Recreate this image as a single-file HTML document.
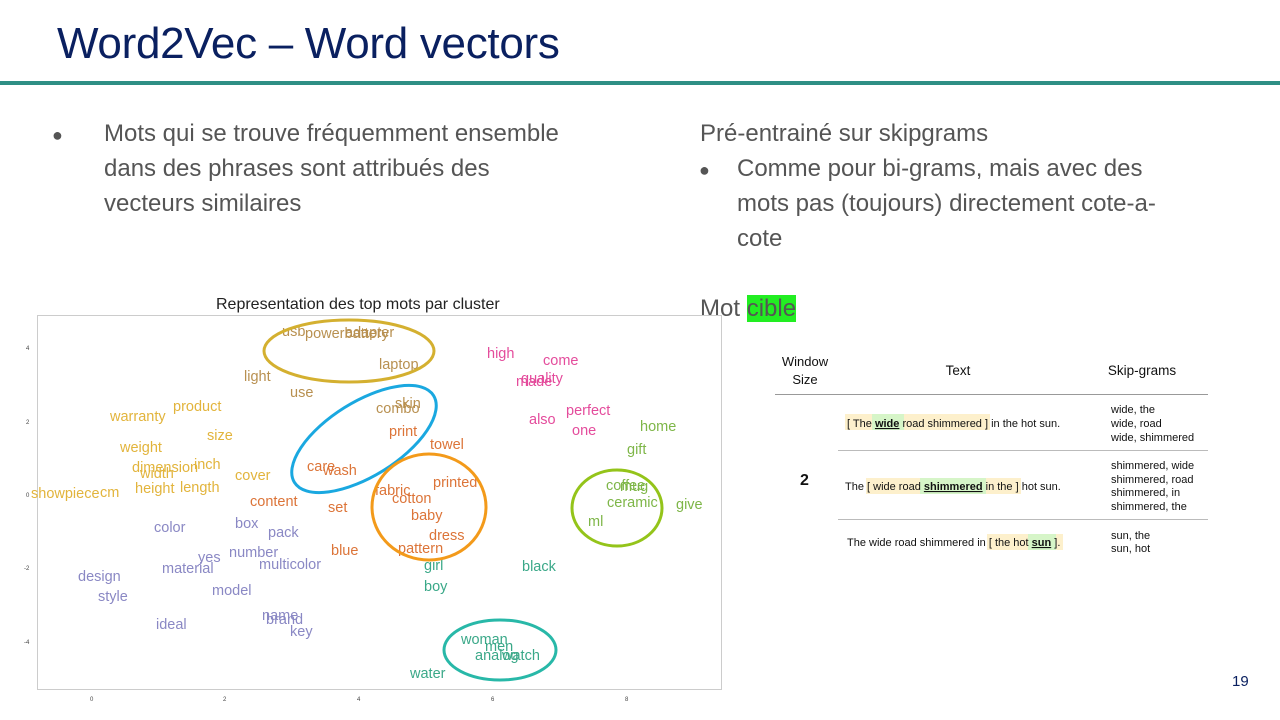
<!DOCTYPE html>
<html><head><meta charset="utf-8"><style>
body{margin:0;width:1280px;height:720px;background:#fff;position:relative;overflow:hidden;font-family:"Liberation Sans",sans-serif}
.t{position:absolute;left:57px;top:19px;font-size:44px;color:#0a2060;letter-spacing:-0.3px}
.bar{position:absolute;left:0;top:81px;width:1280px;height:4px;background:#2e8f85}
.txt{position:absolute;font-size:24px;color:#555;line-height:35px}
.dot{position:absolute;font-size:18px;color:#555}
</style></head><body>
<div class="t">Word2Vec – Word vectors</div>
<div class="bar"></div>
<div class="dot" style="left:52px;top:125px">●</div>
<div class="txt" style="left:104px;top:116px;width:470px">Mots qui se trouve fréquemment ensemble dans des phrases sont attribués des vecteurs similaires</div>
<div class="txt" style="left:700px;top:116px">Pré-entrainé sur skipgrams</div>
<div class="dot" style="left:699px;top:160px">●</div>
<div class="txt" style="left:737px;top:151px;width:455px">Comme pour bi-grams, mais avec des mots pas (toujours) directement cote-a-cote</div>
<div class="txt" style="left:700px;top:291px">Mot <span style="background:#22ee22;color:#555">cible</span></div>
<div style="position:absolute;left:1232px;top:673px;font-size:15px;color:#0a2060">19</div>
<svg style="position:absolute;left:0;top:0" width="1280" height="720" font-family="Liberation Sans, sans-serif">
<text x="216" y="309" font-size="16" fill="#222">Representation des top mots par cluster</text>
<rect x="37.5" y="315.5" width="684" height="374" fill="none" stroke="#ccc"/>
<g font-size="6" fill="#444"><text x="26" y="350">4</text><text x="26" y="424">2</text><text x="26" y="497">0</text><text x="24" y="570">-2</text><text x="24" y="644">-4</text>
<text x="90" y="701">0</text><text x="223" y="701">2</text><text x="357" y="701">4</text><text x="491" y="701">6</text><text x="625" y="701">8</text></g>
<g font-size="14.5">
<g fill="#e2b43c"><text x="110" y="421">warranty</text><text x="173" y="411">product</text><text x="207" y="440">size</text><text x="120" y="452">weight</text><text x="132" y="472">dimension</text><text x="140" y="478">width</text><text x="194" y="469">inch</text><text x="235" y="480">cover</text><text x="135" y="493">height</text><text x="180" y="492">length</text><text x="31" y="498">showpiece</text><text x="100" y="497">cm</text></g>
<g fill="#b89050"><text x="282" y="336">usb</text><text x="305" y="338">powerbattery</text><text x="345" y="337">adapter</text><text x="379" y="369">laptop</text><text x="244" y="381">light</text><text x="290" y="397">use</text><text x="376" y="413">combo</text><text x="395" y="408">skin</text></g>
<g fill="#dc7438"><text x="389" y="436">print</text><text x="430" y="449">towel</text><text x="307" y="471">care</text><text x="323" y="475">wash</text><text x="250" y="506">content</text><text x="328" y="512">set</text><text x="331" y="555">blue</text><text x="375" y="495">fabric</text><text x="392" y="503">cotton</text><text x="411" y="520">baby</text><text x="433" y="487">printed</text><text x="429" y="540">dress</text><text x="398" y="553">pattern</text></g>
<g fill="#8a88c4"><text x="154" y="532">color</text><text x="235" y="528">box</text><text x="268" y="537">pack</text><text x="198" y="562">yes</text><text x="229" y="557">number</text><text x="162" y="573">material</text><text x="259" y="569">multicolor</text><text x="78" y="581">design</text><text x="98" y="601">style</text><text x="212" y="595">model</text><text x="156" y="629">ideal</text><text x="262" y="620">name</text><text x="266" y="624">brand</text><text x="290" y="636">key</text></g>
<g fill="#e44c9c"><text x="487" y="358">high</text><text x="543" y="365">come</text><text x="516" y="386">made</text><text x="521" y="383">quality</text><text x="529" y="424">also</text><text x="566" y="415">perfect</text><text x="572" y="435">one</text></g>
<g fill="#7eb648"><text x="640" y="431">home</text><text x="627" y="454">gift</text><text x="606" y="490">coffee</text><text x="620" y="491">mug</text><text x="607" y="507">ceramic</text><text x="676" y="509">give</text><text x="588" y="526">ml</text></g>
<g fill="#3aa888"><text x="424" y="570">girl</text><text x="424" y="591">boy</text><text x="522" y="571">black</text><text x="461" y="644">woman</text><text x="485" y="651">men</text><text x="475" y="660">analog</text><text x="502" y="660">watch</text><text x="410" y="678">water</text></g>
</g>
<g fill="none" stroke-width="3">
<ellipse cx="349" cy="351" rx="85" ry="31" stroke="#d4b030"/>
<ellipse cx="364" cy="439" rx="82" ry="37" transform="rotate(-32 364 439)" stroke="#1aa8e0"/>
<ellipse cx="429" cy="507" rx="57" ry="53" stroke="#f39a1a"/>
<ellipse cx="617" cy="508" rx="45" ry="38" stroke="#94c41a"/>
<ellipse cx="500" cy="650" rx="56" ry="30" stroke="#28b8a8"/>
</g>
<g font-family="Liberation Sans, sans-serif" fill="#111">
<text x="805" y="366" font-size="13" text-anchor="middle">Window</text><text x="805" y="384" font-size="13" text-anchor="middle">Size</text>
<text x="958" y="375" font-size="13.5" text-anchor="middle">Text</text><text x="1142" y="375" font-size="13.5" text-anchor="middle">Skip-grams</text>
<line x1="775" y1="394.5" x2="1208" y2="394.5" stroke="#999"/>
<line x1="838" y1="450.5" x2="1208" y2="450.5" stroke="#bbb"/>
<line x1="838" y1="519.5" x2="1208" y2="519.5" stroke="#bbb"/>
<text x="800" y="485" font-size="16" font-weight="bold">2</text>
<rect x="845" y="414" width="145" height="16" fill="#fdf0cc"/><rect x="872" y="414" width="32" height="16" fill="#d6f5c8"/>
<rect x="866" y="478" width="155" height="16" fill="#fdf0cc"/><rect x="920" y="478" width="66" height="16" fill="#d6f5c8"/>
<rect x="987" y="534" width="76" height="16" fill="#fdf0cc"/><rect x="1028" y="534" width="28" height="16" fill="#d6f5c8"/>
<g font-size="11">
<text x="847" y="427">[ The  <tspan font-weight="bold" text-decoration="underline">wide</tspan>  road shimmered ] in the hot sun.</text>
<text x="845" y="490">The [ wide road  <tspan font-weight="bold" text-decoration="underline">shimmered</tspan>  in the ] hot sun.</text>
<text x="847" y="546">The wide road shimmered in [ the hot  <tspan font-weight="bold" text-decoration="underline">sun</tspan>  ].</text>
<text x="1111" y="413">wide, the</text><text x="1111" y="427">wide, road</text><text x="1111" y="441">wide, shimmered</text>
<text x="1111" y="469">shimmered, wide</text><text x="1111" y="483">shimmered, road</text><text x="1111" y="496">shimmered, in</text><text x="1111" y="510">shimmered, the</text>
<text x="1111" y="539">sun, the</text><text x="1111" y="552">sun, hot</text>
</g></g>
</svg>
</body></html>
